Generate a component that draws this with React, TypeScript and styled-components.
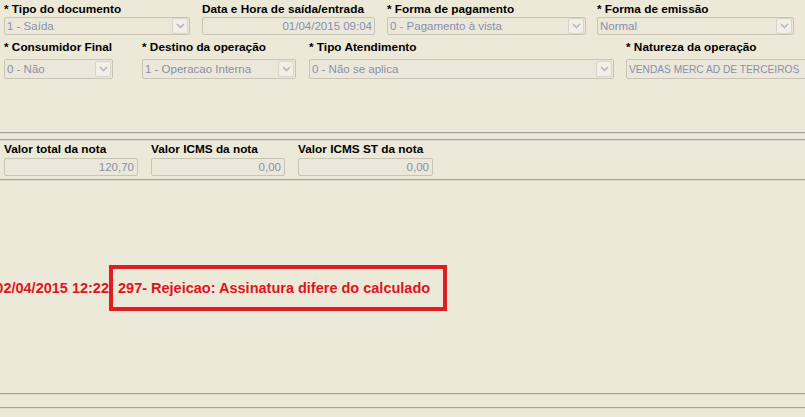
import styled, { createGlobalStyle } from "styled-components";

const GlobalStyle = createGlobalStyle`
  html, body {
    margin: 0;
    padding: 0;
    background: #ece9d8;
  }
  body {
    font-family: "Liberation Sans", Arial, sans-serif;
  }
`;

const Page = styled.div`
  width: 805px;
  height: 417px;
  overflow: hidden;
  background: #ece9d8;
  display: flex;
  flex-direction: column;
`;

const FormRow = styled.div<{ $top: number }>`
  display: flex;
  align-items: flex-start;
  padding-left: 4px;
  margin-top: ${(p) => p.$top}px;
`;

const Field = styled.div<{ $w: number; $ml?: number }>`
  width: ${(p) => p.$w}px;
  margin-left: ${(p) => p.$ml ?? 0}px;
  flex-shrink: 0;
  display: flex;
  flex-direction: column;
`;

const Label = styled.div<{ $h: number }>`
  font-size: 11.8px;
  font-weight: bold;
  color: #000;
  height: ${(p) => p.$h}px;
  line-height: 15px;
  white-space: nowrap;
`;

const Box = styled.div<{ $h: number; $align?: "left" | "right"; $small?: boolean }>`
  box-sizing: border-box;
  height: ${(p) => p.$h}px;
  border: 1px solid #c8c5b6;
  border-radius: 2px;
  background: #ebe8da;
  display: flex;
  align-items: center;
  justify-content: ${(p) => (p.$align === "right" ? "flex-end" : "space-between")};
  padding: 0 1px 0 2px;
  font-size: ${(p) => (p.$small ? 10.2 : 11.5)}px;
  color: #8a8fae;
  white-space: nowrap;
  overflow: hidden;
`;

const Value = styled.span<{ $pr?: number }>`
  padding-right: ${(p) => p.$pr ?? 0}px;
`;

const ArrowBtn = styled.div`
  box-sizing: border-box;
  width: 16px;
  height: 16px;
  border: 1px solid #d8d6cc;
  border-radius: 2px;
  background: #f1efe6;
  display: flex;
  align-items: center;
  justify-content: center;
  flex-shrink: 0;
`;

const Rule = styled.div<{ $top: number }>`
  margin-top: ${(p) => p.$top}px;
  height: 1px;
  background: #a4a39a;
  border-bottom: 1px solid #dcdad0;
`;

const MessageRow = styled.div`
  margin-top: 84px;
  display: flex;
  align-items: center;
  font-size: 14.5px;
  font-weight: bold;
  color: #e0141e;
  white-space: nowrap;
`;

const DateCell = styled.div`
  width: 109px;
  overflow: hidden;
  display: flex;
  justify-content: flex-end;
`;

const Highlight = styled.div`
  box-sizing: border-box;
  width: 338px;
  height: 46px;
  border: 4px solid #e01c24;
  display: flex;
  align-items: center;
  padding-left: 5px;
`;

function Chevron() {
  return (
    <svg width="9" height="6" viewBox="0 0 9 6">
      <path d="M1 1 L4.5 4.5 L8 1" fill="none" stroke="#b4b8c6" strokeWidth="1.6" />
    </svg>
  );
}

function Select({ value, h }: { value: string; h: number }) {
  return (
    <Box $h={h}>
      <span>{value}</span>
      <ArrowBtn>
        <Chevron />
      </ArrowBtn>
    </Box>
  );
}

export default function App() {
  return (
    <Page>
      <GlobalStyle />
      <FormRow $top={2}>
        <Field $w={186}>
          <Label $h={15}>* Tipo do documento</Label>
          <Select value="1 - Saída" h={18} />
        </Field>
        <Field $w={173} $ml={12}>
          <Label $h={15}>Data e Hora de saída/entrada</Label>
          <Box $h={18} $align="right">
            <Value $pr={1}>01/04/2015 09:04</Value>
          </Box>
        </Field>
        <Field $w={199} $ml={12}>
          <Label $h={15}>* Forma de pagamento</Label>
          <Select value="0 - Pagamento à vista" h={18} />
        </Field>
        <Field $w={197} $ml={11}>
          <Label $h={15}>* Forma de emissão</Label>
          <Select value="Normal" h={18} />
        </Field>
      </FormRow>

      <FormRow $top={5}>
        <Field $w={109}>
          <Label $h={19}>* Consumidor Final</Label>
          <Select value="0 - Não" h={20} />
        </Field>
        <Field $w={154} $ml={29}>
          <Label $h={19}>* Destino da operação</Label>
          <Select value="1 - Operacao Interna" h={20} />
        </Field>
        <Field $w={305} $ml={13}>
          <Label $h={19}>* Tipo Atendimento</Label>
          <Select value="0 - Não se aplica" h={20} />
        </Field>
        <Field $w={190} $ml={12}>
          <Label $h={19}>* Natureza da operação</Label>
          <Box $h={20} $small>
            <Value>VENDAS MERC AD DE TERCEIROS</Value>
          </Box>
        </Field>
      </FormRow>

      <Rule $top={53} />
      <Rule $top={5} />

      <FormRow $top={1}>
        <Field $w={134}>
          <Label $h={16}>Valor total da nota</Label>
          <Box $h={18} $align="right">
            <Value $pr={2}>120,70</Value>
          </Box>
        </Field>
        <Field $w={134} $ml={13}>
          <Label $h={16}>Valor ICMS da nota</Label>
          <Box $h={18} $align="right">
            <Value $pr={2}>0,00</Value>
          </Box>
        </Field>
        <Field $w={135} $ml={13}>
          <Label $h={16}>Valor ICMS ST da nota</Label>
          <Box $h={18} $align="right">
            <Value $pr={2}>0,00</Value>
          </Box>
        </Field>
      </FormRow>

      <Rule $top={3} />

      <MessageRow>
        <DateCell>02/04/2015 12:22</DateCell>
        <Highlight>297- Rejeicao: Assinatura difere do calculado</Highlight>
      </MessageRow>

      <Rule $top={82} />
      <Rule $top={12} />
    </Page>
  );
}
